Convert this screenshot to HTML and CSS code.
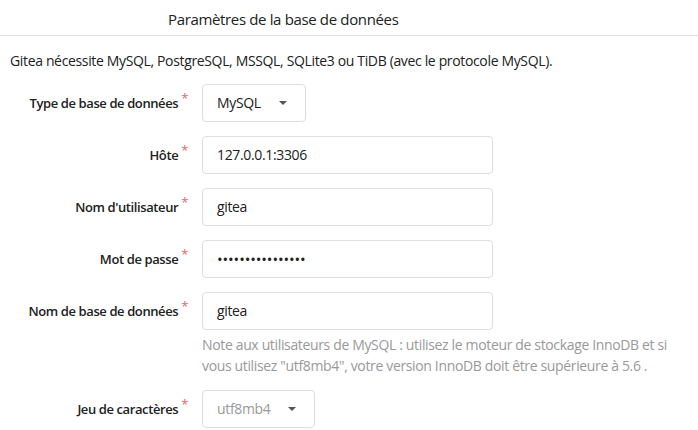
FILE: index.html
```html
<!DOCTYPE html>
<html lang="fr">
<head>
<meta charset="utf-8">
<link rel="stylesheet" href="styles.css">
</head>
<body>
<div class="form">
  <h4 class="divider-header">Paramètres de la base de données</h4>
  <p class="intro">Gitea nécessite MySQL, PostgreSQL, MSSQL, SQLite3 ou TiDB (avec le protocole MySQL).</p>

  <div class="field">
    <label class="label">Type de base de données<span class="req">*</span></label>
    <div class="control">
      <div class="select select-db">
        <span>MySQL</span>
        <span class="caret"></span>
      </div>
    </div>
  </div>

  <div class="field">
    <label class="label">Hôte<span class="req">*</span></label>
    <div class="control"><div class="input">127.0.0.1:3306</div></div>
  </div>

  <div class="field">
    <label class="label">Nom d'utilisateur<span class="req">*</span></label>
    <div class="control"><div class="input">gitea</div></div>
  </div>

  <div class="field">
    <label class="label">Mot de passe<span class="req">*</span></label>
    <div class="control"><div class="input password">••••••••••••••••</div></div>
  </div>

  <div class="field">
    <label class="label">Nom de base de données<span class="req">*</span></label>
    <div class="control">
      <div class="input">gitea</div>
      <p class="help">Note aux utilisateurs de MySQL : utilisez le moteur de stockage InnoDB et si vous utilisez "utf8mb4", votre version InnoDB doit être supérieure à 5.6 .</p>
    </div>
  </div>

  <div class="field">
    <label class="label">Jeu de caractères<span class="req">*</span></label>
    <div class="control">
      <div class="select select-charset disabled">
        <span>utf8mb4</span>
        <span class="caret"></span>
      </div>
    </div>
  </div>
</div>
</body>
</html>
```

FILE: styles.css
```css
* { box-sizing: border-box; }
html, body { margin: 0; padding: 0; background: #fff; }
body {
  font-family: "Open Sans", "Noto Sans", sans-serif;
  font-size: 14px;
  color: #212121;
  letter-spacing: -0.35px;
}
.form { width: 698px; }
.divider-header {
  margin: 0;
  height: 36px;
  padding: 9px 0 0 168px;
  font-size: 15px;
  font-weight: 500;
  line-height: 20px;
  border-bottom: 1px solid #dedede;
}
.intro {
  margin: 0;
  padding: 15px 0 0 10px;
  line-height: 20px;
  height: 48px;
}
.field {
  display: flex;
  align-items: flex-start;
  margin-bottom: 14px;
}
.label {
  width: 188px;
  flex: none;
  text-align: right;
  font-weight: 600;
  line-height: 38px;
  height: 38px;
  font-size: 13px;
  letter-spacing: -0.4px;
}
.req {
  color: #e06a6a;
  font-size: 13px;
  font-weight: 400;
  position: relative;
  top: -5px;
  margin-left: 3px;
}
.control {
  margin-left: 14px;
  width: 291px;
}
.input, .select {
  height: 38px;
  border: 1px solid #dedede;
  border-radius: 4px;
  padding: 0 14px;
  line-height: 36px;
  background: #fff;
}
.password { letter-spacing: -0.1px; font-size: 15px; }
.select { display: flex; align-items: center; }
.select-db { width: 104px; }
.select-charset { width: 113px; }
.select.disabled { color: #999; }
.caret {
  margin-left: auto;
  margin-right: 4px;
  width: 0; height: 0;
  border-left: 4px solid transparent;
  border-right: 4px solid transparent;
  border-top: 4px solid #555;
}
.help {
  margin: 4px 0 0;
  width: 480px;
  color: #999;
  line-height: 21px;
}
```
